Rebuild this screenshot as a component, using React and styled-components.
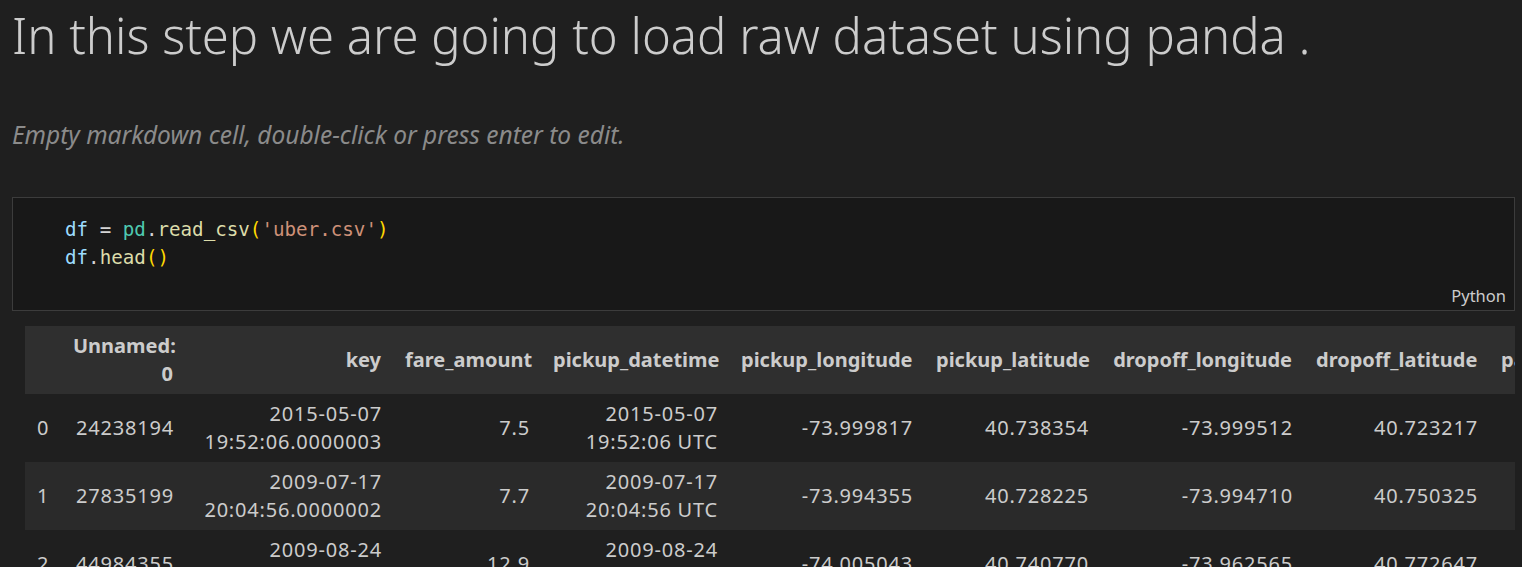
import React from 'react'
import styled, { createGlobalStyle } from 'styled-components'

const GlobalStyle = createGlobalStyle`
  html, body {
    margin: 0;
    padding: 0;
    background: #1f1f1f;
    overflow: hidden;
  }
`

const Notebook = styled.div`
  width: 1522px;
  height: 567px;
  overflow: hidden;
  background: #1f1f1f;
  font-family: 'Noto Sans', 'Open Sans', sans-serif;
  color: #cccccc;
`

const Heading = styled.h1`
  margin: 0;
  padding: 4px 0 0 12px;
  height: 62px;
  font-size: 49px;
  font-weight: 300;
  line-height: 62px;
  color: #cccccc;
`

const EmptyNote = styled.p`
  margin: 0;
  padding: 49px 0 0 12px;
  height: 40px;
  font-size: 24.5px;
  font-style: italic;
  line-height: 40px;
  color: #8b8b8b;
`

const CodeCell = styled.div`
  margin: 42px 7px 0 12px;
  height: 114px;
  box-sizing: border-box;
  border: 1px solid #3c3c3c;
  background: #181818;
  display: flex;
  flex-direction: column;
  padding: 18px 8px 4px 52px;
`

const CodeLine = styled.div`
  font-family: 'DejaVu Sans Mono', 'Liberation Mono', monospace;
  font-size: 19.2px;
  line-height: 28px;
  white-space: pre;
  color: #d4d4d4;
`

const Tok = styled.span`
  color: ${props => props.c};
`

const Lang = styled.div`
  margin-top: auto;
  align-self: flex-end;
  font-size: 16.5px;
  line-height: 20px;
  color: #cccccc;
`

const TableWrap = styled.div`
  margin: 15px 7px 0 25px;
  overflow: hidden;
`

const Table = styled.table`
  border-collapse: collapse;
  table-layout: fixed;
  width: ${props => props.w}px;
  font-size: 20px;
`

const Row = styled.tr`
  height: 68px;
  background: ${props => (props.head ? '#2f2f2f' : props.odd ? '#2a2a2a' : '#1f1f1f')};
`

const Th = styled.th`
  padding: 0 12px;
  text-align: right;
  font-weight: 700;
  line-height: 28px;
  white-space: ${props => (props.wrap ? 'normal' : 'nowrap')};
  overflow: hidden;
  text-overflow: clip;
`

const Td = styled.td`
  padding: 0 11px 0 12px;
  text-align: ${props => (props.left ? 'left' : 'right')};
  line-height: 28px;
  letter-spacing: 0.8px;
  white-space: nowrap;
`

const widths = [36, 124, 208, 148, 188, 195, 176, 204, 185, 180]
const headers = ['', 'Unnamed: 0', 'key', 'fare_amount', 'pickup_datetime', 'pickup_longitude', 'pickup_latitude', 'dropoff_longitude', 'dropoff_latitude', 'passenger_count']

const rows = [
  ['0', '24238194', ['2015-05-07', '19:52:06.0000003'], '7.5', ['2015-05-07', '19:52:06 UTC'], '-73.999817', '40.738354', '-73.999512', '40.723217', '1'],
  ['1', '27835199', ['2009-07-17', '20:04:56.0000002'], '7.7', ['2009-07-17', '20:04:56 UTC'], '-73.994355', '40.728225', '-73.994710', '40.750325', '1'],
  ['2', '44984355', ['2009-08-24', '21:45:00.00000061'], '12.9', ['2009-08-24', '21:45:00 UTC'], '-74.005043', '40.740770', '-73.962565', '40.772647', '1'],
]

const cellText = v => (Array.isArray(v) ? <>{v[0]}<br />{v[1]}</> : v)

export default function App() {
  const total = widths.reduce((a, b) => a + b, 0)
  return (
    <Notebook>
      <GlobalStyle />
      <Heading>In this step we are going to load raw dataset using panda .</Heading>
      <EmptyNote>Empty markdown cell, double-click or press enter to edit.</EmptyNote>
      <CodeCell>
        <CodeLine>
          <Tok c="#9cdcfe">df</Tok> = <Tok c="#4ec9b0">pd</Tok>.<Tok c="#dcdcaa">read_csv</Tok><Tok c="#ffd700">(</Tok><Tok c="#ce9178">'uber.csv'</Tok><Tok c="#ffd700">)</Tok>
        </CodeLine>
        <CodeLine>
          <Tok c="#9cdcfe">df</Tok>.<Tok c="#dcdcaa">head</Tok><Tok c="#ffd700">()</Tok>
        </CodeLine>
        <Lang>Python</Lang>
      </CodeCell>
      <TableWrap>
        <Table w={total}>
          <colgroup>
            {widths.map((w, i) => <col key={i} style={{ width: w }} />)}
          </colgroup>
          <thead>
            <Row head>
              {headers.map((h, i) => <Th key={i} wrap={i === 1 ? 1 : 0}>{h}</Th>)}
            </Row>
          </thead>
          <tbody>
            {rows.map((r, ri) => (
              <Row key={ri} odd={ri % 2 === 1 ? 1 : 0}>
                {r.map((v, ci) => <Td key={ci} left={ci === 0 ? 1 : 0}>{cellText(v)}</Td>)}
              </Row>
            ))}
          </tbody>
        </Table>
      </TableWrap>
    </Notebook>
  )
}
